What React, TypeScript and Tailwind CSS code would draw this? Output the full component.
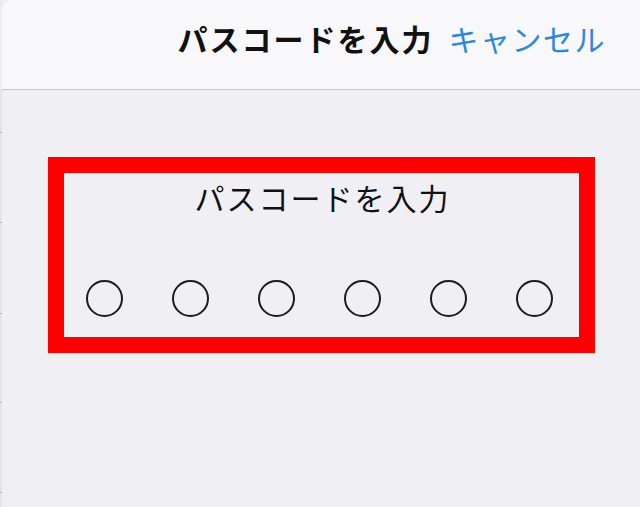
const dots = [0, 1, 2, 3, 4, 5]

const PasscodeSheet = () => {
  return (
    <div className="w-[640px] h-[507px] flex bg-[#efeff4] overflow-hidden" style={{ fontFamily: '"Noto Sans CJK JP", "Noto Sans", sans-serif' }}>
      {/* page behind the sheet */}
      <div className="w-[2px] flex flex-col bg-[#e4e4e8]">
        <div className="h-[89px] bg-[#ececef]" />
        <div className="flex flex-col">
          <div className="h-[43px]" />
          <div className="h-[1px] w-[2px] bg-[#b8b8bc]" />
          <div className="h-[89px]" />
          <div className="h-[1px] w-[2px] bg-[#b8b8bc]" />
          <div className="h-[90px]" />
          <div className="h-[1px] w-[2px] bg-[#b8b8bc]" />
          <div className="h-[88px]" />
          <div className="h-[1px] w-[2px] bg-[#b8b8bc]" />
          <div className="h-[89px]" />
          <div className="h-[1px] w-[2px] bg-[#b8b8bc]" />
        </div>
      </div>

      <div className="flex-1 flex flex-col">
        <header className="h-[90px] shrink-0 bg-[#f8f8fa] border-b border-[#c6c6ca] rounded-tl-[10px] flex items-center justify-end pr-[34px] gap-[15px] pb-[14px]">
          <h1 className="text-[30px] leading-none font-bold text-[#111] tracking-[2px]">パスコードを入力</h1>
          <button className="text-[30px] leading-none text-[#2d87de] tracking-[1.5px]">キャンセル</button>
        </header>

        <main className="pt-[67px] pl-[46px]">
          <div className="w-[547px] h-[196px] border-[16px] border-[#ff0000] flex flex-col items-center">
            <p className="mt-[7px] text-[30px] leading-[34px] text-[#111] tracking-[2px] pl-[2px]">パスコードを入力</p>
            <div className="mt-[66px] w-full flex pl-[22px] gap-[49px]">
              {dots.map((d) => (
                <span key={d} className="w-[37px] h-[37px] rounded-full border-2 border-[#1c1c1e]" />
              ))}
            </div>
          </div>
        </main>
      </div>
    </div>
  )
}

export default function App() {
  return <PasscodeSheet />
}
